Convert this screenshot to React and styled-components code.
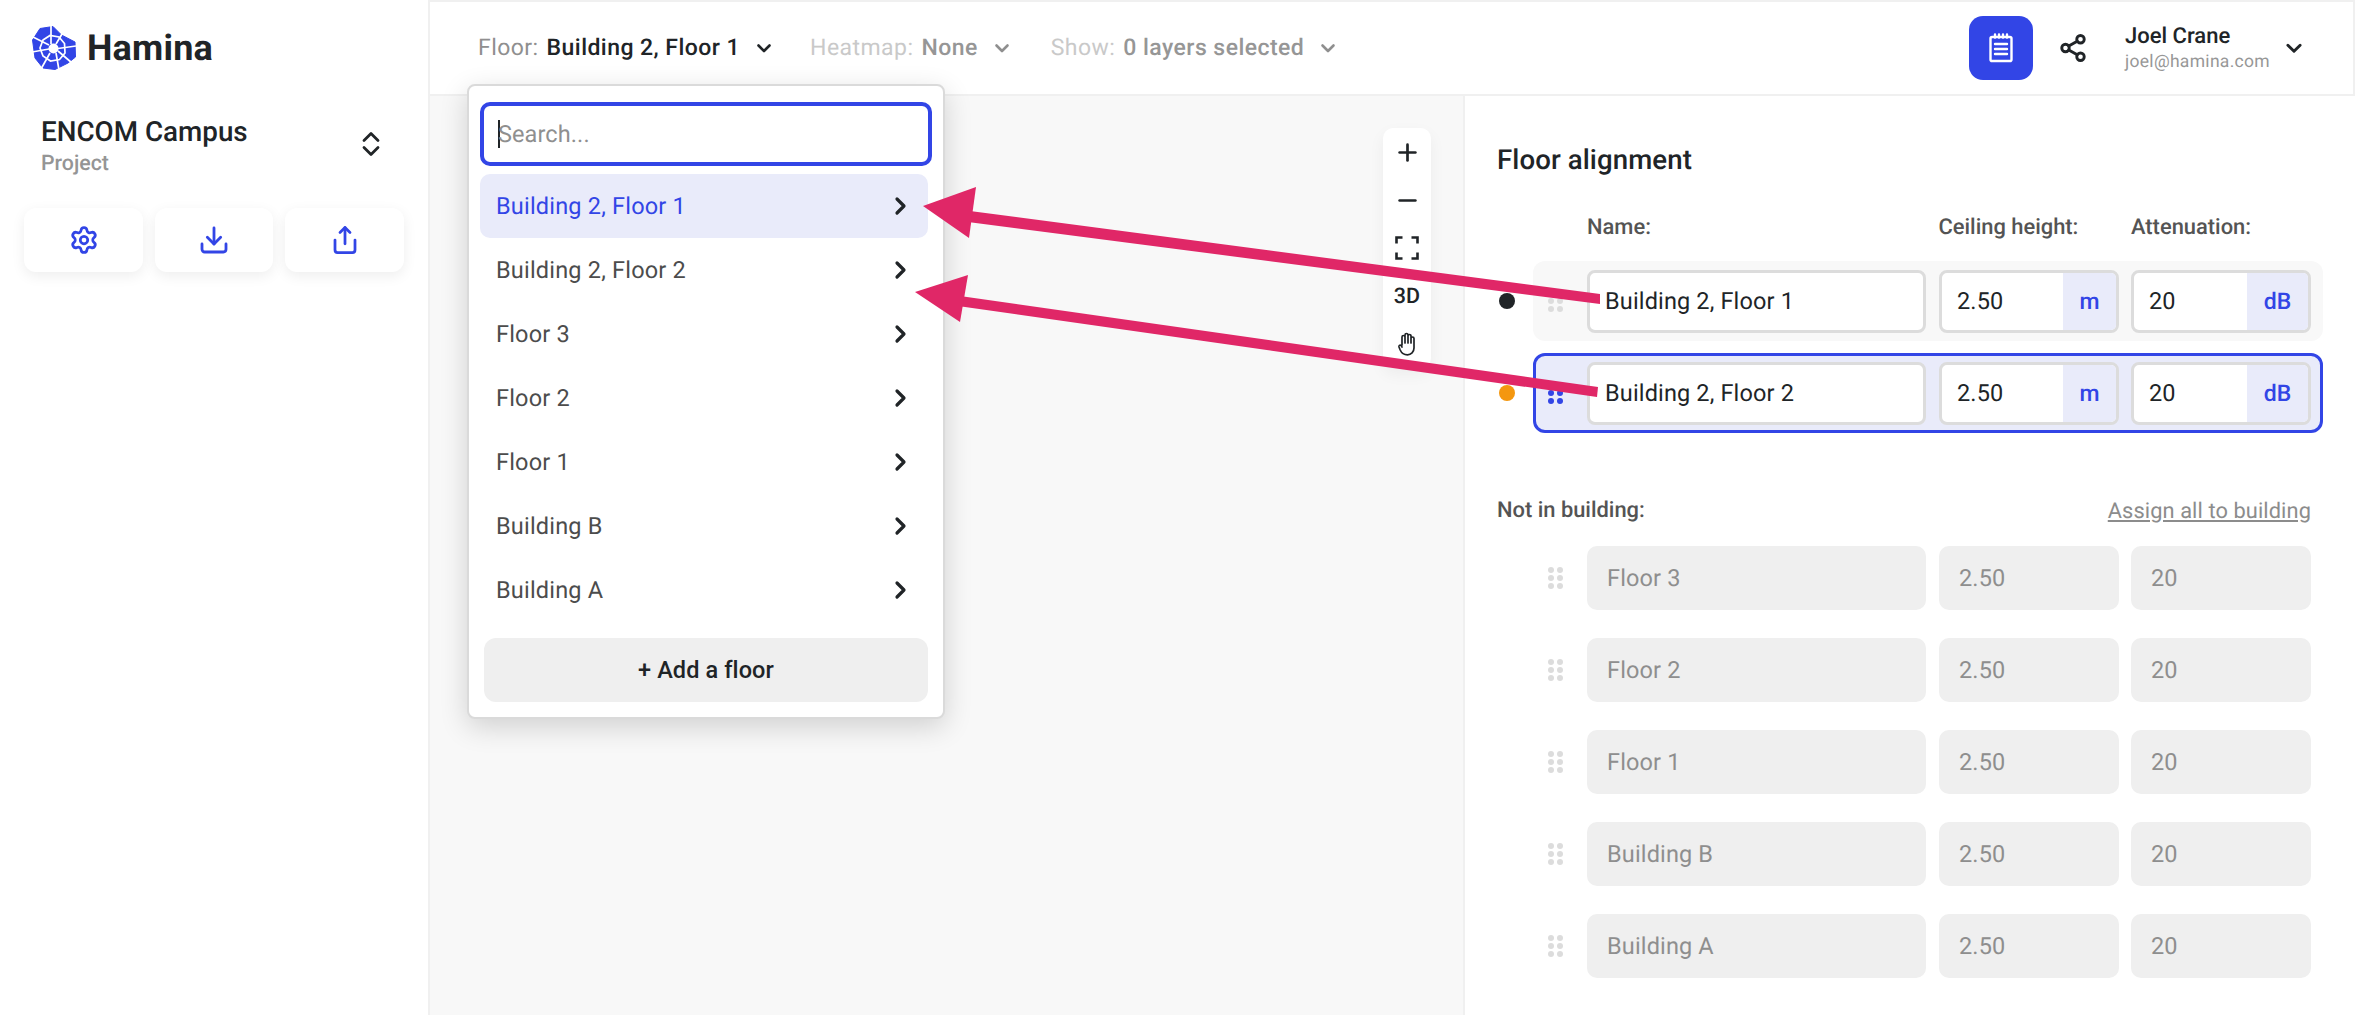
import React from 'react';
import styled, { createGlobalStyle } from 'styled-components';
import { Settings, Download, Share, Share2, Plus, Minus } from 'lucide-react';

const BLUE = '#3245E6';
const TINT = '#E9EBFA';
const INK = '#202427';

const Global = createGlobalStyle`
  html, body { margin: 0; padding: 0; background: #fff; }
  body { font-family: Roboto, "Liberation Sans", sans-serif; color: ${INK}; text-rendering: geometricPrecision; }
  * { box-sizing: border-box; }
`;

const Page = styled.div`
  position: relative; width: 2355px; height: 1015px; display: flex; overflow: hidden; background: #fff;
`;

/* Sidebar */
const Sidebar = styled.aside`
  width: 430px; flex: none; border-right: 2px solid #f0f0f0; padding: 26px 24px 0; display: flex; flex-direction: column;
`;
const Brand = styled.div`
  display: flex; align-items: center; gap: 11px; height: 44px; padding-left: 8px;
  font-size: 36px; font-weight: 700; letter-spacing: 0.2px;
`;
const ProjectRow = styled.div`
  display: flex; align-items: center; justify-content: space-between; margin-top: 43px; padding: 0 24px 0 17px; height: 68px;
`;
const ProjectName = styled.div`font-size: 27.8px; font-weight: 500; line-height: 32px;`;
const ProjectSub = styled.div`font-size: 21.3px; font-weight: 500; color: #959595; line-height: 30px; margin-top: 1px;`;
const UpDownSlot = styled.div`display: flex; margin-bottom: 6px;`;
const ActionRow = styled.div`display: grid; grid-template-columns: 119px 118px 119px; gap: 12px; margin-top: 27px;`;
const ActionButton = styled.button`
  height: 64px; border: 0; border-radius: 12px; background: #fff; color: ${BLUE}; display: flex; align-items: center; justify-content: center;
  box-shadow: 0 4px 14px rgba(0,0,0,.07); padding: 0;
`;

/* Top bar */
const Main = styled.div`flex: 1; min-width: 0; display: flex; flex-direction: column;`;
const TopBar = styled.header`
  height: 96px; flex: none; border-top: 2px solid #f0f0f0; border-bottom: 2px solid #f0f0f0; border-right: 2px solid #f0f0f0;
  display: flex; align-items: center; padding: 0 49px 0 48px;
`;
const Picker = styled.div`
  display: flex; align-items: center; font-size: 23px; margin-right: ${p => p.$gap}px; letter-spacing: .45px; line-height: 30px;
`;
const PickerLabel = styled.span`color: ${p => p.$muted ? '#c9c9c9' : '#8f8f8f'}; margin-right: 8px;`;
const PickerValue = styled.span`font-weight: 500; color: ${p => p.$muted ? '#969696' : INK}; margin-right: 15px;`;
const Spacer = styled.div`flex: 1;`;
const NotesButton = styled.button`
  width: 64px; height: 64px; border: 0; border-radius: 14px; background: ${BLUE}; display: flex; align-items: center; justify-content: center; padding: 0;
`;
const ShareSlot = styled.div`width: 80px; display: flex; justify-content: center; color: ${INK};`;
const User = styled.div`width: 159px; margin-left: 12px; padding-top: 1px;`;
const UserName = styled.div`font-size: 22px; font-weight: 500; line-height: 26px;`;
const UserMail = styled.div`font-size: 17.5px; color: #979797; line-height: 24px; letter-spacing: .3px;`;

const Body = styled.div`flex: 1; display: flex; min-height: 0;`;
const Canvas = styled.div`flex: 1; background: #f8f8f8; position: relative; border-right: 2px solid #f0f0f0;`;
const ZoomBar = styled.div`
  position: absolute; top: 32px; right: 32px; width: 48px; height: 240px; background: #fff; border-radius: 10px;
  box-shadow: 0 6px 16px rgba(0,0,0,.05); display: flex; flex-direction: column; align-items: center;
`;
const ZoomItem = styled.div`height: 48px; flex: none; width: 100%; display: flex; align-items: center; justify-content: center; font-size: 21.5px; font-weight: 500; color: ${INK};`;

/* Panel */
const Panel = styled.section`width: 890px; flex: none; padding: 46px 44px 0 32px;`;
const Title = styled.h2`margin: 0; font-size: 27.6px; font-weight: 500; line-height: 36px; letter-spacing: .1px;`;
const Columns = styled.div`
  display: grid; grid-template-columns: 339px 180px 180px; column-gap: 12.5px; margin: 36px 0 0 90px;
`;
const ColumnHead = styled.div`font-size: 21.9px; font-weight: 500; color: #545454; line-height: 28px; white-space: nowrap;`;
const FloorLine = styled.div`display: flex; align-items: center; margin-top: ${p => p.$top}px;`;
const Dot = styled.span`display: block; width: 16px; height: 16px; border-radius: 50%; background: ${p => p.$color}; margin: 0 2px; flex: none;`;
const Slot = styled.div`width: 36px; flex: none; `;
const FloorRow = styled.div`
  width: 790px; height: 80px; border-radius: 12px; display: flex; align-items: center; padding-right: 12px;
  background: ${p => p.$active ? TINT : '#f8f8f8'};
  border: ${p => p.$active ? `3px solid ${BLUE}` : '3px solid transparent'};
`;
const Handle = styled.div`
  width: 51px; flex: none; display: grid; grid-template-columns: 6px 6px; gap: 2px 3px; justify-content: start; padding-left: 12px;
  color: ${p => p.$color};
  & > i { width: 6px; height: 6px; border-radius: 50%; background: currentColor; display: block; }
`;
const Field = styled.div`
  height: 63px; border: 3px solid #dcdcdc; border-radius: 8px; background: #fff; display: flex; align-items: stretch; overflow: hidden;
  font-size: 23.5px; width: ${p => p.$w}px; margin-right: ${p => p.$mr || 0}px; flex: none;
`;
const FieldText = styled.div`flex: 1; padding-left: 15px; display: flex; align-items: center; color: ${INK}; letter-spacing: .15px;`;
const Unit = styled.div`
  width: ${p => p.$w}px; background: ${TINT}; color: ${BLUE}; font-weight: 500; display: flex; align-items: center; justify-content: center; font-size: 23px;
`;
const SubHead = styled.div`display: flex; justify-content: space-between; align-items: center; margin-top: 63px; height: 30px;`;
const AssignLink = styled.a`font-size: 21.8px; color: #8c8c8c; text-decoration: underline; letter-spacing: .1px;`;
const GreyRow = styled.div`display: flex; height: 64px; margin-top: ${p => p.$top}px; align-items: center; padding-left: 39px;`;
const GreyField = styled.div`
  height: 64px; width: ${p => p.$w}px; flex: none; margin-right: ${p => p.$mr || 0}px; background: #efefef; border-radius: 10px; color: #8e8e8e;
  font-size: 23.5px; display: flex; align-items: center; padding-left: 20px; letter-spacing: .15px;
`;

/* Dropdown */
const Dropdown = styled.div`
  position: absolute; left: 467px; top: 84px; width: 478px; height: 635px; background: #fff; border: 2px solid #dadada; border-radius: 8px;
  box-shadow: 0 8px 28px rgba(0,0,0,.16); padding: 16px 14px 0 11px; display: flex; flex-direction: column;
`;
const Search = styled.div`
  height: 64px; width: 452px; border: 4px solid ${BLUE}; border-radius: 10px; display: flex; align-items: center; padding-left: 14px;
  color: #8f8f8f; font-size: 23.5px; flex: none; letter-spacing: .1px;
`;
const Caret = styled.span`width: 2px; height: 28px; background: ${INK}; margin-right: -2px; flex: none;`;
const Options = styled.div`margin-top: 8px; display: flex; flex-direction: column;`;
const Option = styled.div`
  height: 64px; width: 448px; border-radius: 10px; display: flex; align-items: center; justify-content: space-between; padding: 0 20px 0 16px;
  font-size: 23.5px; letter-spacing: .2px; color: ${p => p.$active ? BLUE : '#4c4c4c'}; background: ${p => p.$active ? TINT : 'transparent'};
`;
const OptionLabel = styled.span`margin-top: -1px;`;
const AddFloor = styled.button`
  margin: 16px 0 0 4px; height: 64px; width: 444px; border: 0; border-radius: 12px; background: #efefef; color: ${INK};
  font: 500 23.5px Roboto, sans-serif; letter-spacing: .1px; flex: none;
`;
const Overlay = styled.svg`position: absolute; left: 0; top: 0; pointer-events: none;`;

const Chevron = ({ size = 18, color = INK, w = 2.6 }) => (
  <svg width={size} height={size} viewBox="0 0 18 18" fill="none" stroke={color} strokeWidth={w} strokeLinecap="round" strokeLinejoin="round">
    <path d="M3.5 6.5 9 12l5.5-5.5" />
  </svg>
);
const ChevronRight = () => (
  <svg width="14" height="20" viewBox="0 0 14 20" fill="none" stroke={INK} strokeWidth="3.2" strokeLinecap="round" strokeLinejoin="round">
    <path d="M3 3l7 7-7 7" />
  </svg>
);
const UpDown = () => (
  <svg width="18" height="26" viewBox="0 0 18 26" fill="none" stroke={INK} strokeWidth="2.8" strokeLinecap="round" strokeLinejoin="round">
    <path d="M2 9.5 9 2.5l7 7M2 16.5l7 7 7-7" />
  </svg>
);
const Corners = () => (
  <svg width="24" height="24" viewBox="0 0 24 24" fill="none" stroke={INK} strokeWidth="2.6">
    <path d="M1.5 7.5v-6h6M16.5 1.5h6v6M22.5 16.5v6h-6M7.5 22.5h-6v-6" />
  </svg>
);
const HandIcon = () => (
  <svg width="20" height="24" viewBox="0 0 20 24" fill="none" stroke={INK} strokeWidth="1.7" strokeLinecap="round" strokeLinejoin="round">
    <path d="M5 13V5a1.5 1.5 0 0 1 3 0v6V3a1.5 1.5 0 0 1 3 0v8V4a1.5 1.5 0 0 1 3 0v7V6.5a1.5 1.5 0 0 1 3 0V16c0 4-3 6.8-6.5 6.8S4.5 21 3.2 18L2 15c-.5-1.4 1-2.5 2-1.6L5 15" />
  </svg>
);
const Notes = () => (
  <svg width="24" height="30" viewBox="0 0 24 30" fill="none" stroke="#fff" strokeWidth="2.4" strokeLinecap="round">
    <rect x="1.5" y="4" width="21" height="24" rx="1.6" />
    <path d="M6 1.5v3M10 1.5v3M14 1.5v3M18 1.5v3M6 11h12M6 16h12M6 21h12" />
  </svg>
);
const Logo = () => (
  <svg width="44" height="44" viewBox="0 0 44 44">
    <path d="M8 2.5 21 0.5l8.500 8.500L43 16l.5 15-7.500 6-13 6.500-12-1.500L3 32 .5 14z" fill={BLUE} stroke={BLUE} strokeWidth="1" strokeLinejoin="round" />
    <g fill="none" stroke="#fff" strokeWidth="1.7">
      <path d="M11 14 18 9.500 27 11l5.500 6.500L33 27l-5.500 6.500-9 1.500L11 30l-3-8z" />
      <path d="M19 0v18M1 11l16 8M0 26l17-3M9 43l9-16M27 44l-3-17M40 37l-14-12M44 20l-18 2.500M30 8l-6 10" />
    </g>
    <circle cx="21.500" cy="22.500" r="5" fill="#fff" />
  </svg>
);

const FloorHandle = ({ color }) => (
  <Handle $color={color}><i /><i /><i /><i /><i /><i /></Handle>
);

const options = ['Building 2, Floor 1', 'Building 2, Floor 2', 'Floor 3', 'Floor 2', 'Floor 1', 'Building B', 'Building A'];
const unassigned = ['Floor 3', 'Floor 2', 'Floor 1', 'Building B', 'Building A'];
const building = [
  { name: 'Building 2, Floor 1', dot: INK, handle: '#dcdcdc', top: 0 },
  { name: 'Building 2, Floor 2', dot: '#F4970F', handle: BLUE, top: 12, active: true },
];

export default function App() {
  return (
    <Page>
      <Global />
      <Sidebar>
        <Brand><Logo />Hamina</Brand>
        <ProjectRow>
          <div>
            <ProjectName>ENCOM Campus</ProjectName>
            <ProjectSub>Project</ProjectSub>
          </div>
          <UpDownSlot><UpDown /></UpDownSlot>
        </ProjectRow>
        <ActionRow>
          <ActionButton><Settings size={30} strokeWidth={2.2} /></ActionButton>
          <ActionButton><Download size={32} strokeWidth={2.1} /></ActionButton>
          <ActionButton><Share size={30} strokeWidth={2.2} /></ActionButton>
        </ActionRow>
      </Sidebar>
      <Main>
        <TopBar>
          <Picker $gap={37}>
            <PickerLabel>Floor:</PickerLabel>
            <PickerValue>Building 2, Floor 1</PickerValue>
            <Chevron />
          </Picker>
          <Picker $gap={40}>
            <PickerLabel $muted>Heatmap:</PickerLabel>
            <PickerValue $muted>None</PickerValue>
            <Chevron color="#8f8f8f" />
          </Picker>
          <Picker $gap={0}>
            <PickerLabel $muted>Show:</PickerLabel>
            <PickerValue $muted>0 layers selected</PickerValue>
            <Chevron color="#8f8f8f" />
          </Picker>
          <Spacer />
          <NotesButton><Notes /></NotesButton>
          <ShareSlot><Share2 size={30} strokeWidth={2.3} /></ShareSlot>
          <User>
            <UserName>Joel Crane</UserName>
            <UserMail>joel@hamina.com</UserMail>
          </User>
          <Chevron size={20} />
        </TopBar>
        <Body>
          <Canvas>
            <ZoomBar>
              <ZoomItem><Plus size={27} strokeWidth={2.4} /></ZoomItem>
              <ZoomItem><Minus size={27} strokeWidth={2.4} /></ZoomItem>
              <ZoomItem><Corners /></ZoomItem>
              <ZoomItem>3D</ZoomItem>
              <ZoomItem><HandIcon /></ZoomItem>
            </ZoomBar>
          </Canvas>
          <Panel>
            <Title>Floor alignment</Title>
            <Columns>
              <ColumnHead>Name:</ColumnHead>
              <ColumnHead>Ceiling height:</ColumnHead>
              <ColumnHead>Attenuation:</ColumnHead>
            </Columns>
            {building.map((f, i) => (
              <FloorLine key={f.name} $top={i === 0 ? 19 : f.top}>
                <Slot><Dot $color={f.dot} /></Slot>
                <FloorRow $active={f.active}>
                  <FloorHandle color={f.handle} />
                  <Field $w={339} $mr={13}><FieldText>{f.name}</FieldText></Field>
                  <Field $w={180} $mr={12}><FieldText>2.50</FieldText><Unit $w={53}>m</Unit></Field>
                  <Field $w={180}><FieldText>20</FieldText><Unit $w={61}>dB</Unit></Field>
                </FloorRow>
              </FloorLine>
            ))}
            <SubHead>
              <ColumnHead>Not in building:</ColumnHead>
              <AssignLink>Assign all to building</AssignLink>
            </SubHead>
            {unassigned.map((name, i) => (
              <GreyRow key={name} $top={i === 0 ? 20 : 28}>
                <FloorHandle color="#dcdcdc" />
                <GreyField $w={339} $mr={13}>{name}</GreyField>
                <GreyField $w={180} $mr={12}>2.50</GreyField>
                <GreyField $w={180}>20</GreyField>
              </GreyRow>
            ))}
          </Panel>
        </Body>
      </Main>
      <Dropdown>
        <Search><Caret />Search...</Search>
        <Options>
          {options.map((o, i) => (
            <Option key={o} $active={i === 0}><OptionLabel>{o}</OptionLabel><ChevronRight /></Option>
          ))}
        </Options>
        <AddFloor>+ Add a floor</AddFloor>
      </Dropdown>
      <Overlay width="2355" height="1015" viewBox="0 0 2355 1015">
        <g fill="#E02767">
          <path d="M1600 294 1600 304 968 222 970 211z" />
          <path d="M923 206 976 187 969 238z" />
          <path d="M1598 387 1597 397 958 306 960 296z" />
          <path d="M915 292 968 275 960 322z" />
        </g>
      </Overlay>
    </Page>
  );
}
